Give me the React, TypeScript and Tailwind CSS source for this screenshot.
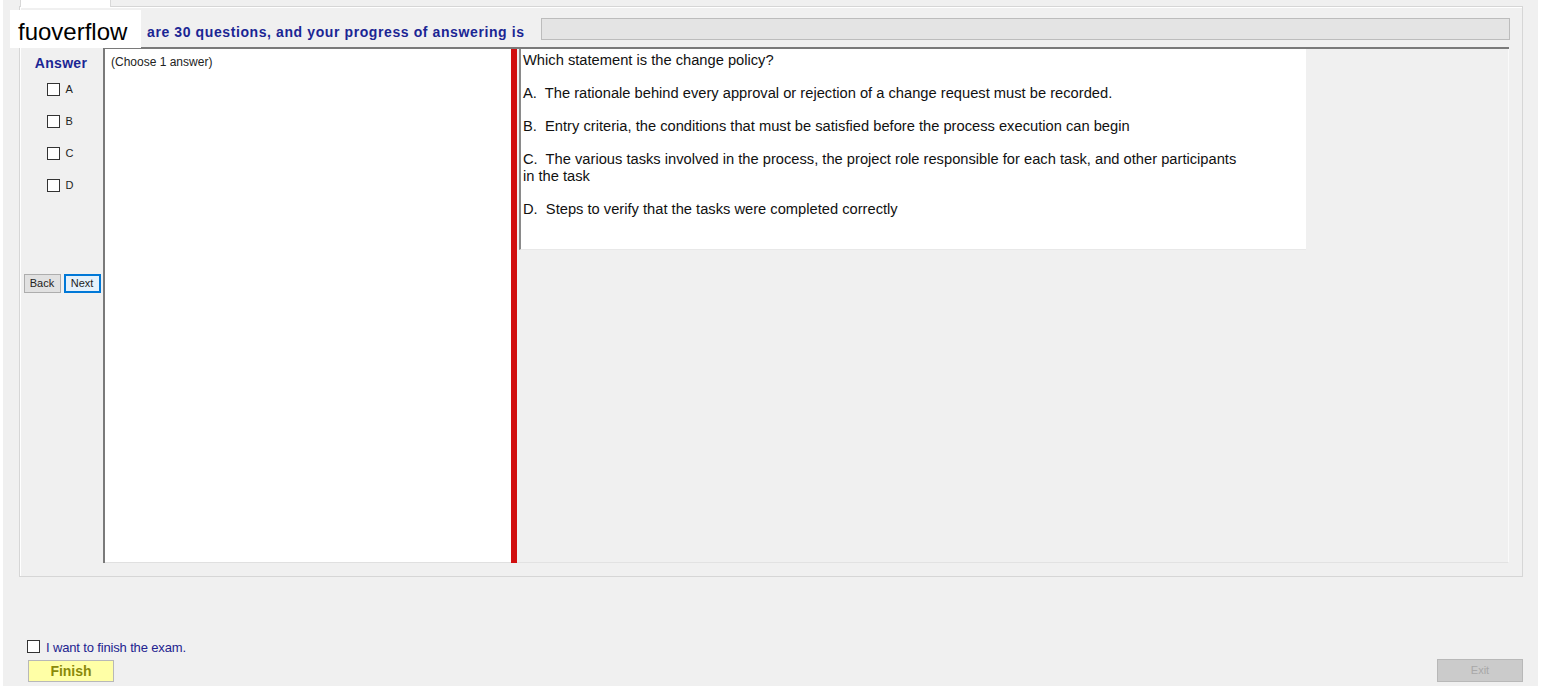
import React from "react";

const options = [
  "A.  The rationale behind every approval or rejection of a change request must be recorded.",
  "B.  Entry criteria, the conditions that must be satisfied before the process execution can begin",
  "C.  The various tasks involved in the process, the project role responsible for each task, and other participants\nin the task",
  "D.  Steps to verify that the tasks were completed correctly",
];

function Box() {
  return <span className="inline-block w-[13px] h-[13px] border border-[#333] bg-white" />;
}

export default function App() {
  return (
    <div className="relative w-[1542px] h-[690px] bg-white font-['Liberation_Sans',Arial,sans-serif] overflow-hidden">
      <div className="ml-[3px] w-[1535px] h-[686px] bg-[#f0f0f0] flex flex-col">
        {/* tab stub */}
        <div className="ml-[17px] w-[91px] h-[7px] bg-white border-x border-[#d8d8d8] -mb-px relative z-10" />

        {/* main panel */}
        <div className="ml-[16px] w-[1504px] h-[571px] border border-[#d6d6d6] shadow-[inset_1px_1px_0_#fff] flex flex-col">
          {/* header */}
          <div className="flex items-center mt-[11px] h-[22px]">
            <div className="w-[521px] pl-[127px] text-[14px] font-bold text-[#1b2694] whitespace-nowrap leading-none pt-[6px] tracking-[0.6px]">
              are 30 questions, and your progress of answering is
            </div>
            <div className="w-[969px] h-[22px] bg-[#e4e4e4] border border-[#bcbcbc]" />
          </div>

          {/* body */}
          <div className="flex mt-[7px]">
            {/* answer column */}
            <div className="w-[83px] flex flex-col items-center pl-[2px]">
              <div className="text-[14px] font-bold text-[#1b2694] mt-[8px] leading-[16px] tracking-[0.3px] mr-[3px]">Answer</div>
              <div className="flex flex-col gap-[19px] mt-[12px] w-[40px] pl-[4px]">
                {["A", "B", "C", "D"].map((l) => (
                  <div key={l} className="flex items-center gap-[6px] h-[13px] text-[11px] text-[#222]">
                    <Box />
                    <span>{l}</span>
                  </div>
                ))}
              </div>
              <div className="flex gap-[3px] mt-[82px] ml-[-1px]">
                <button className="w-[37px] h-[19px] bg-[#e1e1e1] border border-[#adadad] text-[11px] text-[#222] leading-none">Back</button>
                <button className="w-[37px] h-[19px] bg-[#e5f1fb] border-2 border-[#0078d7] text-[11px] text-[#222] leading-none">Next</button>
              </div>
            </div>

            {/* content frame */}
            <div className="w-[1406px] h-[516px] border-t-2 border-l-2 border-[#7a7a7a] flex">
              <div className="w-[406px] h-full bg-white border-b border-[#e0e0e0] pl-[6px] pt-[5px] text-[12px] text-[#222] leading-[16px]">
                (Choose 1 answer)
              </div>
              <div className="w-[6px] h-full bg-[#d10f0f]" />
              <div className="flex-1 h-full bg-[#f0f0f0] border-r border-[#fafafa] border-b border-b-[#e2e2e2]">
                <div className="ml-[2px] w-[787px] h-[201px] bg-white border-l-2 border-[#8a8a8a] border-b border-b-[#e8e8e8] pl-[2px] pt-[3px] text-[14.7px] text-[#111] leading-[17px]">
                  <p>Which statement is the change policy?</p>
                  {options.map((o) => (
                    <p key={o} className="mt-[16px] whitespace-pre-wrap">{o}</p>
                  ))}
                </div>
              </div>
            </div>
          </div>
        </div>

        {/* finish area */}
        <div className="mt-[62px] ml-[24px] flex items-center gap-[6px] h-[14px]">
          <Box />
          <span className="text-[13px] text-[#23238f] pt-[3px] tracking-[-0.15px]">I want to finish the exam.</span>
        </div>
        <div className="mt-[6px] flex justify-between items-end">
          <button className="ml-[25px] w-[86px] h-[22px] bg-[#ffffa6] border border-[#b8b8b8] text-[14px] font-bold text-[#8a8a0a] leading-none">
            Finish
          </button>
          <button className="mr-[15px] w-[86px] h-[23px] bg-[#cbcbcb] border border-[#b8b8b8] text-[11px] text-[#a8a8a8] leading-none">
            Exit
          </button>
        </div>
      </div>

      {/* watermark */}
      <div className="absolute left-[10px] top-[10px] w-[131px] h-[38px] bg-white flex items-center pl-[8px] pt-[5px] text-[24px] text-black">
        fuoverflow
      </div>
    </div>
  );
}
